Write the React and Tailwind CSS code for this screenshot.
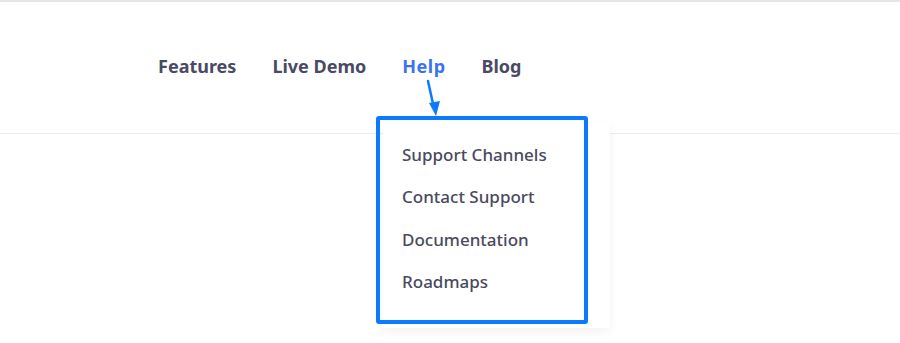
import React from 'react';

const links = ['Features', 'Live Demo', 'Help', 'Blog'];
const helpItems = ['Support Channels', 'Contact Support', 'Documentation', 'Roadmaps'];

export default function App() {
  return (
    <div className="w-[900px] h-[343px] bg-white relative overflow-hidden" style={{ fontFamily: '"Noto Sans", Lato, sans-serif' }}>
      <header className="border-t-2 border-[#e6e6e6] border-b border-b-[#ececec] h-[134px]">
        <nav className="flex items-center gap-[36px] pl-[158px] pt-[50px]">
          {links.map((l) => (
            <a key={l} href="#" className={`text-[18px] font-bold leading-[28px] ${l === 'Help' ? 'text-[#3c72f0] tracking-[0.5px]' : 'text-[#4a4a64]'}`}>
              {l}
            </a>
          ))}
        </nav>
      </header>

      {/* dropdown panel */}
      <div className="absolute left-[383px] top-[122px] w-[227px] h-[206px] bg-white shadow-[0_4px_10px_rgba(0,0,0,0.05)]">
        <ul className="flex flex-col pt-[20px] pl-[19px]">
          {helpItems.map((i) => (
            <li key={i} className="h-[42.4px] leading-[26px] text-[17px] font-medium text-[#4a4a5e]">{i}</li>
          ))}
        </ul>
      </div>

      {/* annotation */}
      <div className="absolute left-[376px] top-[116px] w-[212px] h-[208px] border-4 border-[#0a7bff] rounded-[3px]" />
      <svg className="absolute left-0 top-0" width="900" height="343">
        <line x1="428" y1="81" x2="433.5" y2="106" stroke="#0a7bff" strokeWidth="2.5" strokeLinecap="round" />
        <polygon points="429,103 440,101 436,116" fill="#0a7bff" />
      </svg>
    </div>
  );
}
